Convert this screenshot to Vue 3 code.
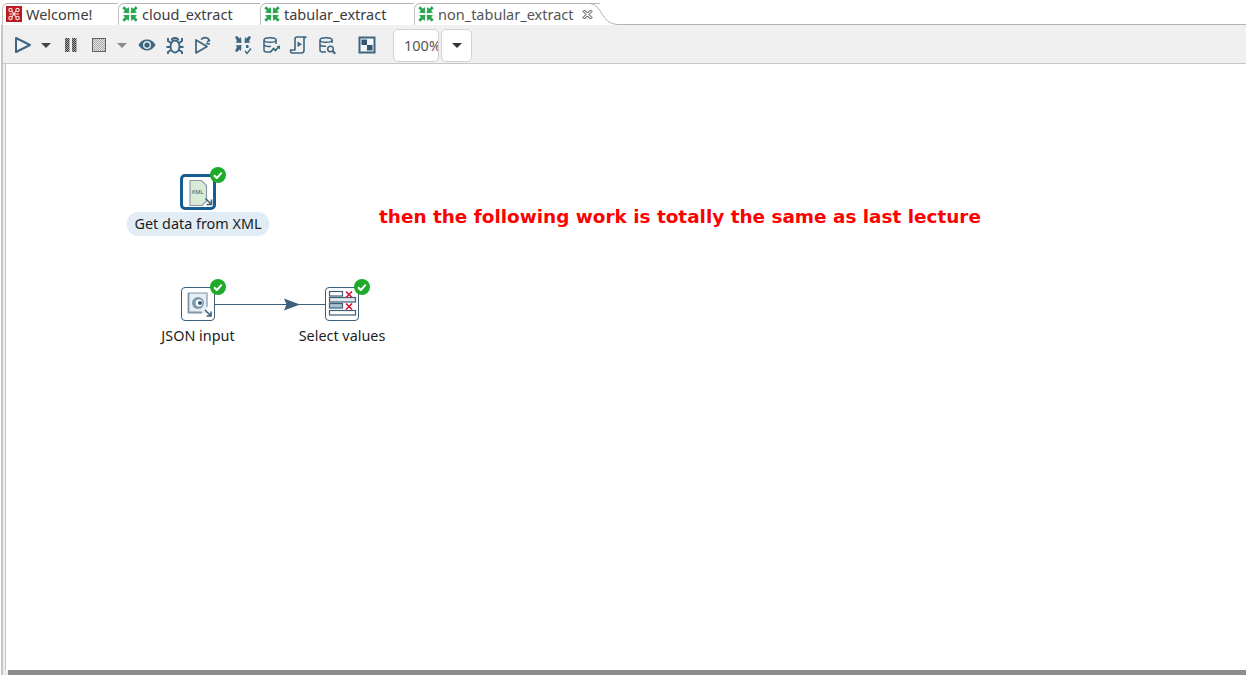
<template>
  <div class="editor">
    <div class="tabs">
      <div v-for="tab in tabs" :key="tab.name" class="tab" :class="{ active: tab.active }" :style="{ width: tab.width + 'px' }">
        <svg v-if="tab.welcome" class="tab-icon" viewBox="0 0 16 16">
          <rect width="16" height="16" fill="#bb1a1e" />
          <g fill="none" stroke="#f6d5d5" stroke-width="1.2">
            <circle cx="4.5" cy="4" r="1.7" />
            <circle cx="11.5" cy="4" r="1.7" />
            <circle cx="4.5" cy="12" r="1.7" />
            <circle cx="11.5" cy="12" r="1.7" />
            <path d="M6 5l4 6M10 5l-4 6M3 8h10" />
          </g>
        </svg>
        <svg v-else class="tab-icon" viewBox="0 0 16 16">
          <g fill="#2aa650">
            <path d="M0.3 2.300L2.300 .3 4.800 2.800 6.800 1 7.300 7.300 1 6.800 2.800 4.800z" />
            <path d="M15.700 2.300L13.700 .3 11.200 2.800 9.200 1 8.700 7.300 15 6.800 13.200 4.800z" />
            <path d="M0.300 13.700L2.300 15.700 4.800 13.200 6.800 15 7.300 8.700 1 9.200 2.800 11.200z" />
            <path d="M15.700 13.700L13.700 15.700 11.200 13.200 9.200 15 8.700 8.700 15 9.200 13.200 11.200z" />
          </g>
        </svg>
        <span class="tab-label">{{ tab.name }}</span>
        <svg v-if="tab.active" class="tab-close" viewBox="0 0 11 11">
          <path d="M1 2.500L2.500 1 5.500 4 8.500 1 10 2.500 7 5.500 10 8.500 8.500 10 5.500 7 2.500 10 1 8.500 4 5.500z" fill="#fff" stroke="#333" stroke-width="1" />
        </svg>
      </div>
      <svg class="tab-curve" viewBox="0 0 30 22">
        <path d="M0 0.500C12 1 11 21 27 21.500H30" fill="none" stroke="#b4b4b4" />
      </svg>
      <div class="tab-rest"></div>
    </div>

    <div class="pane">
      <div class="toolbar">
        <button class="tool"><svg viewBox="0 0 20 20"><path d="M3 3l14 7-14 7z" fill="none" stroke="#3c6580" stroke-width="2" stroke-linejoin="round" /></svg></button>
        <button class="tool small"><span class="caret"></span></button>
        <button class="tool pause"><svg viewBox="0 0 20 20"><defs><pattern id="dots" width="2" height="2" patternUnits="userSpaceOnUse"><rect width="2" height="2" fill="#a8a8a8" /><rect width="1" height="1" fill="#3a3a3a" /><rect x="1" y="1" width="1" height="1" fill="#3a3a3a" /></pattern></defs><rect x="4" y="3" width="4.500" height="14" fill="url(#dots)" /><rect x="11" y="3" width="4.500" height="14" fill="url(#dots)" /></svg></button>
        <button class="tool"><svg viewBox="0 0 20 20"><defs><pattern id="soft" width="2" height="2" patternUnits="userSpaceOnUse"><rect width="2" height="2" fill="#e4e4e4" /><rect width="1" height="1" fill="#a8a8a8" /><rect x="1" y="1" width="1" height="1" fill="#a8a8a8" /></pattern></defs><rect x="3.500" y="3.500" width="13" height="13" fill="url(#soft)" stroke="#5f5f5f" /></svg></button>
        <button class="tool small"><span class="caret muted"></span></button>
        <button class="tool eye"><svg viewBox="0 0 20 20"><path d="M1.500 10C4 5.800 7 4.600 10 4.600S16 5.800 18.500 10C16 14.200 13 15.400 10 15.400S4 14.200 1.500 10z" fill="#3c6580" /><circle cx="10" cy="10" r="4" fill="#dfe8ee" /><circle cx="10" cy="10" r="2.600" fill="#3c6580" /></svg></button>
        <button class="tool"><svg viewBox="0 0 20 20"><g fill="none" stroke="#3c6580" stroke-width="1.900"><ellipse cx="10" cy="11.500" rx="4.500" ry="6" /><path d="M6.500 5.500C7 3.500 8.500 3 10 3s3 .5 3.500 2.500M6 8L3 6V3M14 8l3-2V3M5 12H1.500M15 12h3.500M6 15l-3 2v2M14 15l3 2v2" /></g></svg></button>
        <button class="tool"><svg viewBox="0 0 20 20"><g fill="none" stroke="#3c6580" stroke-width="1.700"><path d="M3 5v13l11-6.500z" stroke-linejoin="round" /><path d="M8 4.500C11 1.500 15 2 16.500 5.500L14 7" /><path d="M13 8.500l4 .5" /></g></svg></button>

        <button class="tool first-group"><svg viewBox="0 0 20 20"><g fill="#3c6580"><path d="M2 2l2-1 2.500 2.500L8 2l.5 6-6-.5 1.500-1.500z" /><path d="M18 2l-2-1-2.500 2.500L12 2l-.5 6 6-.5-1.500-1.500z" /><path d="M2 16l2 1 2.500-2.500L8 16l.5-6-6 .5 1.500 1.500z" /><path d="M13 10h2.500v3H13z" /></g><path d="M12 16l2 2.500 4-5" fill="none" stroke="#3c6580" stroke-width="1.400" /></svg></button>
        <button class="tool"><svg viewBox="0 0 20 20"><g fill="none" stroke="#3c6580" stroke-width="1.500"><path d="M9 17H5.500C4 17 3 16 3 15V5c0-3 12-3 12 0v4" /><path d="M3 5c0 3 12 3 12 0M3 10c1.500 1.500 5 1.500 7 1.200" /></g><path d="M9 17.500l3.500-4 2 2 3-3.500" fill="none" stroke="#3c6580" stroke-width="1.800" /><path d="M19 10.500v4l-3.500-3z" fill="#3c6580" /></svg></button>
        <button class="tool"><svg viewBox="0 0 20 20"><g fill="none" stroke="#3c6580" stroke-width="1.600"><path d="M6 15V4c0-1.500 1-2 2-2h9c-1 0-2 .5-2 2v11c0 2-1 3-2.500 3H3c-1 0-1.500-1-1.500-3z" stroke-linejoin="round" /></g><path d="M8.500 6.500l4.500 2.800-4.500 2.800z" fill="#3c6580" /></svg></button>
        <button class="tool"><svg viewBox="0 0 20 20"><g fill="none" stroke="#3c6580" stroke-width="1.500"><path d="M9 17H5.500C4 17 3 16 3 15V5c0-3 12-3 12 0v3" /><path d="M3 5c0 3 12 3 12 0M3 10c1.500 1.500 4 1.500 6 1.200" /><circle cx="13.500" cy="14" r="2.800" /><path d="M15.500 16l2.800 2.800" stroke-width="2" /></g></svg></button>

        <button class="tool second-group"><svg viewBox="0 0 20 20"><rect x="2.500" y="2.500" width="15" height="15" fill="#f4f7f9" stroke="#3c6580" stroke-width="2" /><rect x="4.500" y="4.500" width="5.500" height="5.500" fill="#33576f" /><rect x="10" y="10" width="5.500" height="5.500" fill="#33576f" /></svg></button>

        <div class="zoom-input"><span>100%</span></div>
        <button class="zoom-btn"><span class="caret dark"></span></button>
      </div>

      <div class="canvas-frame">
        <div class="canvas">
          <svg class="hop" width="120" height="21" viewBox="0 0 120 21">
            <path d="M0 10.500H110" stroke="#3f6078" stroke-width="1" />
            <path d="M69 4.500l16 6-16 6 2.500-6z" fill="#3f6078" />
          </svg>

          <div v-for="node in nodes" :key="node.name" class="node" :style="{ left: node.x + 'px', top: node.y + 'px' }">
            <div class="node-box" :class="{ selected: node.selected }">
              <svg v-if="node.kind === 'xml'" class="node-icon shifted" width="32" height="32" viewBox="0 0 32 32">
                <path d="M8 4.500H19.500L24.500 9.500V25L20 29.500H8z" fill="#d9ebd6" stroke="#8a9aa5" stroke-width="1.200" />
                <text x="15.500" y="17.500" class="xml-text" text-anchor="middle">XML</text>
                <path d="M23.500 22.500l6 6M29.500 23.500V28.500H24.500" fill="none" stroke="#3f6078" stroke-width="1.600" />
              </svg>
              <svg v-else-if="node.kind === 'json'" class="node-icon" width="32" height="32" viewBox="0 0 32 32">
                <rect x="6" y="5" width="19" height="20" fill="#e7eef3" />
                <path d="M6.500 5V24.500H20" fill="none" stroke="#7f97a8" stroke-width="1.800" />
                <path d="M6 5H25V19" fill="none" stroke="#7f97a8" stroke-width="1.200" />
                <circle cx="16" cy="15" r="6" fill="#7b9bb0" />
                <circle cx="17" cy="15" r="3.400" fill="#fff" />
                <circle cx="18" cy="15" r="2" fill="#39566b" />
                <path d="M23 22l6 6M29 23.500V28H24.500" fill="none" stroke="#3f6078" stroke-width="1.600" />
              </svg>
              <svg v-else class="node-icon shifted" width="32" height="32" viewBox="0 0 32 32">
                <g fill="#fff" stroke="#3f6078" stroke-width="1.200">
                  <rect x="4.500" y="4.500" width="13" height="4.500" />
                  <rect x="4.500" y="10.500" width="26" height="4.500" fill="#dfe8ee" />
                  <rect x="4.500" y="16.500" width="13" height="4.500" fill="#a9bfce" />
                  <rect x="4.500" y="23.500" width="26" height="4.500" />
                </g>
                <path d="M21 4.500l6 6M27 4.500l-6 6M21 16.500l6 6M27 16.500l-6 6" stroke="#d8183c" stroke-width="1.700" />
              </svg>
            </div>
            <svg class="badge" width="16" height="16" viewBox="0 0 16 16">
              <circle cx="8" cy="8" r="8" fill="#1faa2c" />
              <path d="M4 8.200l2.800 2.800 5-5.400" fill="none" stroke="#fff" stroke-width="2" />
            </svg>
            <div class="node-label" :class="{ selected: node.selected }">{{ node.name }}</div>
          </div>

          <div class="note">then the following work is totally the same as last lecture</div>
        </div>
        <div class="scrollbar"></div>
      </div>
    </div>
  </div>
</template>

<script setup>
const tabs = [
  { name: 'Welcome!', width: 116, welcome: true },
  { name: 'cloud_extract', width: 142 },
  { name: 'tabular_extract', width: 154 },
  { name: 'non_tabular_extract', width: 186, active: true }
]

const nodes = [
  { name: 'Get data from XML', kind: 'xml', x: 192, y: 128, selected: true },
  { name: 'JSON input', kind: 'json', x: 192, y: 240 },
  { name: 'Select values', kind: 'select', x: 336, y: 240 }
]
</script>

<style>
html,
body {
  margin: 0;
  background: #fff;
  overflow: hidden;
}
</style>

<style scoped>
.editor {
  width: 1246px;
  height: 675px;
  display: flex;
  flex-direction: column;
  overflow: hidden;
  font-family: "Noto Sans", sans-serif;
  color: #3c3c3c;
  background: #fff;
}

.tabs {
  height: 22px;
  margin-top: 3px;
  padding-left: 2px;
  display: flex;
  flex: none;
}

.tab {
  box-sizing: border-box;
  height: 22px;
  flex: none;
  display: flex;
  align-items: center;
  padding: 0 0 1px 3px;
  border-top: 1px solid #b4b4b4;
  border-left: 1px solid #c4c4c4;
  border-radius: 6px 0 0 0;
  background: #fff;
  font-size: 14.5px;
}

.tab-icon {
  width: 16px;
  height: 16px;
  flex: none;
  margin-right: 4px;
}

.tab-label {
  white-space: nowrap;
}

.tab.active {
  color: #555;
}

.tab-close {
  width: 11px;
  height: 11px;
  margin-left: 8px;
  flex: none;
}

.tab-curve {
  width: 30px;
  height: 22px;
  margin-left: -10px;
  flex: none;
}

.tab-rest {
  flex: 1;
  border-bottom: 1px solid #b4b4b4;
}

.pane {
  flex: 1;
  min-height: 0;
  margin-left: 1px;
  display: flex;
  flex-direction: column;
  border-left: 2px solid #c4c4c4;
}

.toolbar {
  box-sizing: border-box;
  height: 39px;
  flex: none;
  padding: 2px 0 0 6px;
  display: flex;
  align-items: center;
  background: #f0f0f0;
  border-bottom: 1px solid #c8c8c8;
}

.tool {
  width: 28px;
  height: 28px;
  flex: none;
  padding: 0;
  border: 0;
  background: none;
  display: flex;
  align-items: center;
  justify-content: center;
}

.tool svg {
  width: 20px;
  height: 20px;
}

.tool.small {
  width: 18px;
}

.tool.pause {
  margin-left: 2px;
}

.tool.eye {
  margin-left: 2px;
}

.first-group {
  margin-left: 12px;
}

.second-group {
  margin-left: 12px;
}

.caret {
  width: 0;
  height: 0;
  border-left: 5px solid transparent;
  border-right: 5px solid transparent;
  border-top: 5px solid #444;
}

.caret.muted {
  border-top-color: #8a8a8a;
}

.caret.dark {
  border-top-color: #333;
}

.zoom-input {
  box-sizing: border-box;
  width: 46px;
  height: 33px;
  margin-left: 12px;
  padding-left: 10px;
  display: flex;
  align-items: center;
  overflow: hidden;
  background: #fff;
  border: 1px solid #d2d2d2;
  border-radius: 5px;
  font-size: 14.5px;
  color: #555;
  white-space: nowrap;
}

.zoom-btn {
  box-sizing: border-box;
  width: 31px;
  height: 33px;
  margin-left: 2px;
  padding: 0;
  display: flex;
  align-items: center;
  justify-content: center;
  background: #fff;
  border: 1px solid #d2d2d2;
  border-radius: 5px;
}

.canvas-frame {
  flex: 1;
  min-height: 0;
  display: flex;
  flex-direction: column;
  padding-left: 2px;
  background: #eeeeee;
}

.canvas {
  position: relative;
  flex: 1;
  border-left: 1px solid #c4c4c4;
  background: #fff;
}

.hop {
  position: absolute;
  left: 209px;
  top: 230px;
}

.node {
  position: absolute;
  width: 0;
  height: 0;
}

.node-box {
  position: absolute;
  left: -17px;
  top: -17px;
  box-sizing: border-box;
  width: 34px;
  height: 34px;
  background: #fff;
  border: 1px solid #3f6078;
  border-radius: 4px;
}

.node-box.selected {
  left: -18px;
  top: -18px;
  width: 36px;
  height: 36px;
  border: 3px solid #155d93;
  border-radius: 5px;
}

.node-icon {
  display: block;
  position: absolute;
  left: 0;
  top: 0;
  overflow: visible;
}

.node-icon.shifted {
  left: -1px;
  top: -1px;
}

.badge {
  position: absolute;
  left: 12px;
  top: -25px;
}

.node-label {
  position: absolute;
  top: 22px;
  left: 0;
  transform: translateX(-50%);
  white-space: nowrap;
  font-size: 14.4px;
  line-height: 20px;
  color: #1d1d1d;
}

.node-label.selected {
  padding: 2px 8px;
  border-radius: 12px;
  background: #e1ecf5;
  top: 20px;
}

.xml-text {
  font-family: "Liberation Sans", sans-serif;
  font-size: 6px;
  fill: #33505f;
}

.note {
  position: absolute;
  left: 373px;
  top: 140px;
  white-space: nowrap;
  font-family: "DejaVu Sans", sans-serif;
  font-weight: 700;
  font-size: 18.43px;
  line-height: 26px;
  color: #f00;
}

.scrollbar {
  height: 5px;
  flex: none;
  margin-left: 3px;
  background: #8c8c8c;
}
</style>
